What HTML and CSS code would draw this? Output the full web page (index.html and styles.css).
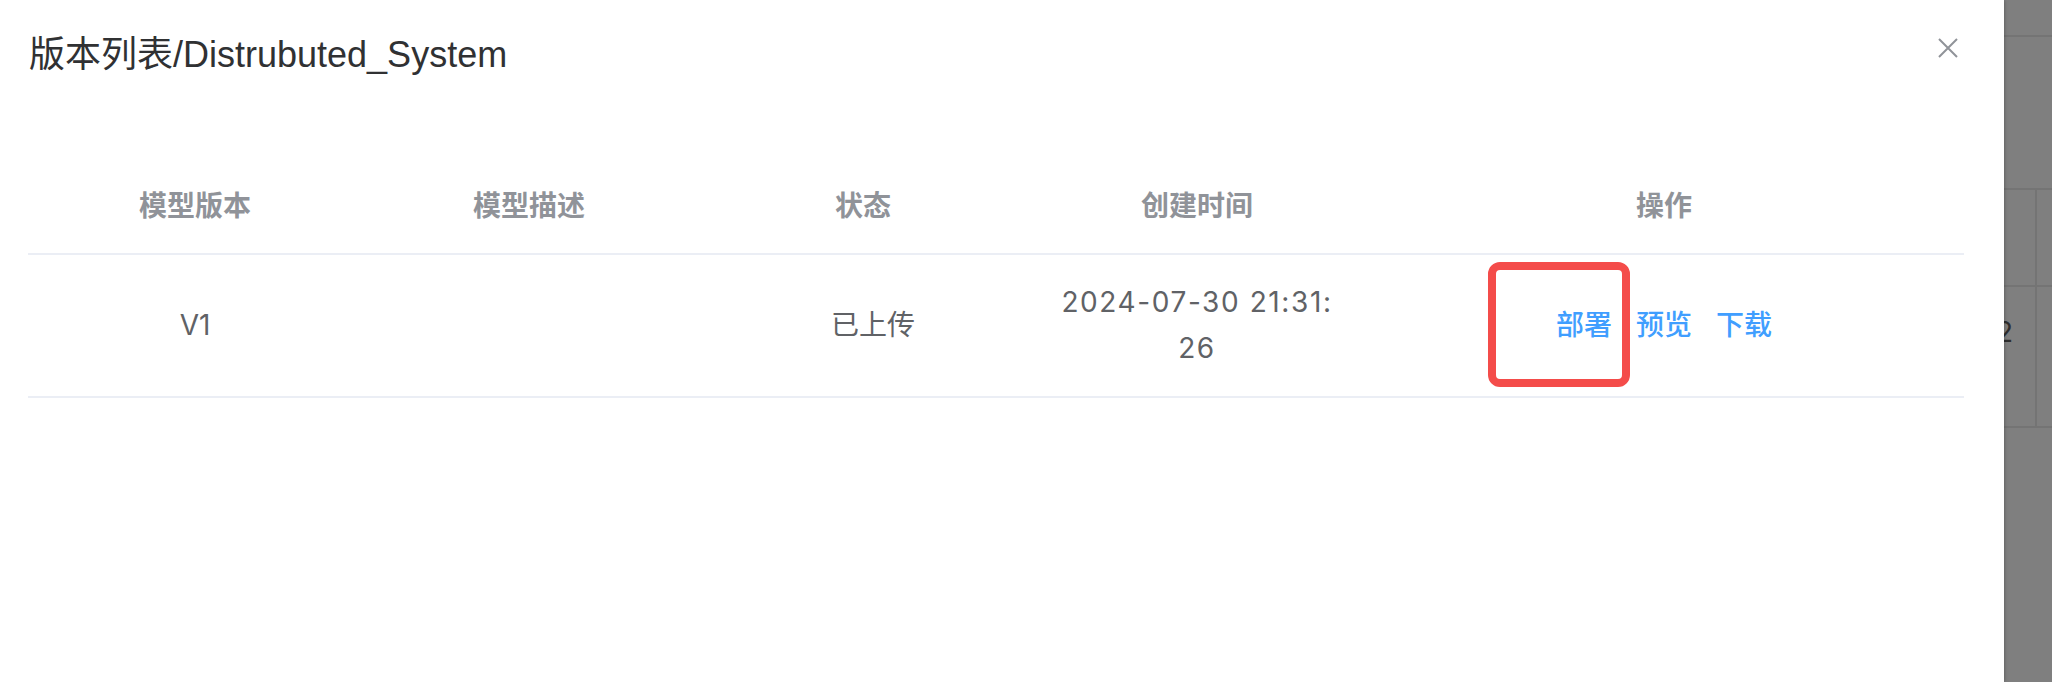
FILE: index.html
```html
<!DOCTYPE html>
<html>

<head>
    <meta charset="utf-8">
    <title>版本列表</title>
    <meta name="viewport" content="width=device-width, initial-scale=1">
    <link rel="stylesheet" href="styles.css">
</head>

<body>
    <div class="screen">
        <div class="dialog">
            <div class="dialog-header">
                <span class="dialog-title">版本列表/Distrubuted_System</span>
                <button class="dialog-close" aria-label="关闭">
                    <svg width="20" height="20" viewBox="0 0 20 20">
                        <path d="M1 1 L19 19 M19 1 L1 19" stroke="#909399" stroke-width="2" fill="none" />
                    </svg>
                </button>
            </div>

            <div class="dialog-body">
                <table class="version-table">
                    <colgroup>
                        <col class="col-narrow">
                        <col class="col-narrow">
                        <col class="col-narrow">
                        <col class="col-narrow">
                        <col class="col-wide">
                    </colgroup>
                    <thead>
                        <tr>
                            <th>模型版本</th>
                            <th>模型描述</th>
                            <th>状态</th>
                            <th>创建时间</th>
                            <th>操作</th>
                        </tr>
                    </thead>
                    <tbody>
                        <tr>
                            <td>V1</td>
                            <td></td>
                            <td><span class="status">已上传</span></td>
                            <td><span class="time">2024-07-30 21:31:<br>26</span></td>
                            <td class="ops">
                                <a class="link-btn">部署</a><a class="link-btn">预览</a><a class="link-btn">下载</a>
                                <span class="mark"></span>
                            </td>
                        </tr>
                    </tbody>
                </table>
            </div>
        </div>

        <div class="backdrop">
            <div class="page-top"></div>
            <div class="page-table">
                <div class="page-row page-head">
                    <div class="page-cell"></div>
                    <div class="page-cell"></div>
                </div>
                <div class="page-row page-body">
                    <div class="page-cell"><span>2</span></div>
                    <div class="page-cell"></div>
                </div>
            </div>
        </div>
    </div>
</body>

</html>
```

FILE: styles.css
```css
* {
    margin: 0;
    padding: 0;
    box-sizing: border-box;
}

body {
    font: 28px Inter, "Noto Sans CJK SC", sans-serif;
    background: #fff;
    overflow: hidden;
}

.screen {
    display: flex;
    height: 682px;
}

.dialog {
    width: 2004px;
    flex: none;
    background: #fff;
    box-shadow: 0 0 4px rgba(0, 0, 0, .35);
    position: relative;
    z-index: 1;
}

.dialog-header {
    display: flex;
    justify-content: space-between;
    align-items: flex-start;
    padding: 31px 46px 0 29px;
}

.dialog-title {
    font: 36px/48px "Liberation Sans", "Noto Sans CJK SC", sans-serif;
    color: #303133;
}

.dialog-close {
    margin-top: 7px;
    width: 20px;
    height: 20px;
    border: 0;
    background: none;
    display: flex;
}

.dialog-body {
    padding: 80px 40px 0 28px;
}

.version-table {
    width: 1936px;
    table-layout: fixed;
    border-collapse: collapse;
}

.col-narrow {
    width: 334px;
}

.col-wide {
    width: 600px;
}

.version-table th,
.version-table td {
    text-align: center;
    line-height: 46px;
    border-bottom: 2px solid #ebeef5;
}

.version-table th {
    padding: 24px 0;
    color: #909399;
    font-weight: 600;
}

.version-table td {
    padding: 24px 20px 25px;
    color: #606266;
    vertical-align: middle;
}

.time {
    letter-spacing: 1.6px;
}

.status {
    margin-left: 20px;
}

.ops {
    position: relative;
}

.link-btn {
    color: #409eff;
    font-weight: 500;
    cursor: pointer;
}

.link-btn + .link-btn {
    margin-left: 24px;
}

/* red annotation box round the first action */
.mark {
    position: absolute;
    left: 124px;
    top: 7px;
    width: 142px;
    height: 125px;
    border: 8px solid #f44c4a;
    border-radius: 12px;
}

.backdrop {
    flex: 1;
    background: #7f7f7f;
}

.page-top {
    height: 37px;
    border-bottom: 2px solid #747474;
}

.page-table {
    margin-top: 151px;
}

.page-row {
    display: flex;
    border-top: 2px solid #747474;
}

.page-head {
    height: 97px;
}

.page-body {
    height: 143px;
    border-bottom: 2px solid #747474;
}

.page-cell {
    width: 33px;
    flex: none;
    border-right: 2px solid #747474;
    display: flex;
    justify-content: flex-end;
    padding: 22px 22px 0 0;
    line-height: 46px;
    color: #2e2e2e;
}

.page-cell + .page-cell {
    flex: 1;
    border-right: 0;
}
```
